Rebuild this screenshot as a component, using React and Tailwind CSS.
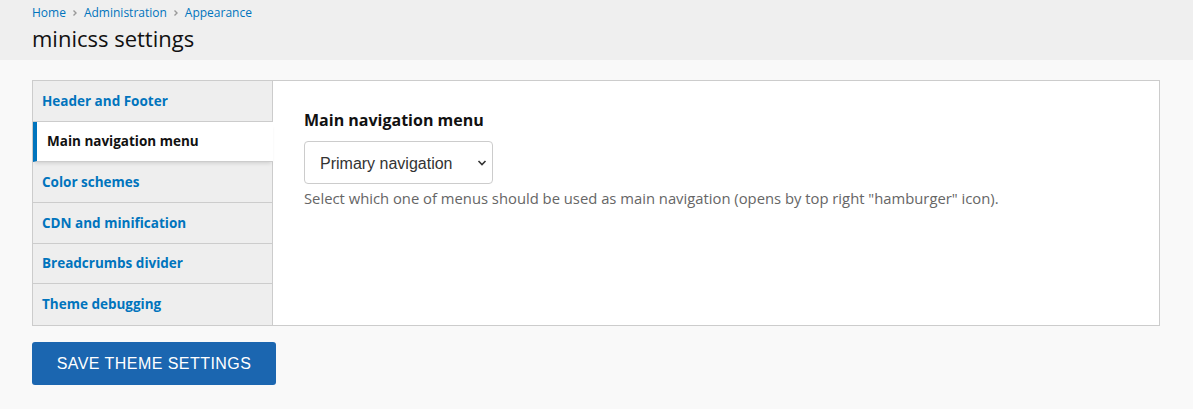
import { useState } from 'react';

const tabs = [
  'Header and Footer',
  'Main navigation menu',
  'Color schemes',
  'CDN and minification',
  'Breadcrumbs divider',
  'Theme debugging',
];

export default function App() {
  const [active, setActive] = useState(1);

  return (
    <div className="min-h-[409px] bg-[#f9f9f9] font-['Open_Sans',sans-serif]">
      <div className="h-[60px] bg-[#efefef] px-8 pt-[4px]">
        <nav className="flex items-center text-[12px] leading-[18px] text-[#0074bd]">
          <a href="#">Home</a>
          <svg width="12" height="12" viewBox="0 0 12 12" className="mx-[3px]">
            <path d="M4.5 3.5 7 6l-2.5 2.5" fill="none" stroke="#999" strokeWidth="1.4" />
          </svg>
          <a href="#">Administration</a>
          <svg width="12" height="12" viewBox="0 0 12 12" className="mx-[3px]">
            <path d="M4.5 3.5 7 6l-2.5 2.5" fill="none" stroke="#999" strokeWidth="1.4" />
          </svg>
          <a href="#">Appearance</a>
        </nav>
        <h1 className="mt-[1px] text-[22px] leading-[30px] text-[#111]">minicss settings</h1>
      </div>

      <div className="px-8 pt-5 pb-6">
        <div className="flex w-[1128px] border border-[#ccc] bg-white">
          <ul className="w-[240px] shrink-0 border-r border-[#ccc] bg-[#eee]">
            {tabs.map((t, i) =>
              i === active ? (
                <li
                  key={t}
                  className="relative -mr-px flex h-[40.67px] items-center border-b border-l-4 border-b-[#ccc] border-l-[#0074bd] bg-white pl-[10px] text-[13.5px] font-bold text-[#111] shadow-[0_3px_4px_-2px_rgba(0,0,0,0.15)]"
                >
                  {t}
                </li>
              ) : (
                <li
                  key={t}
                  onClick={() => setActive(i)}
                  className={`flex h-[40.67px] cursor-pointer items-center pl-[9px] text-[13.5px] font-bold text-[#0074bd] ${i < tabs.length - 1 ? 'border-b border-[#ccc]' : ''}`}
                >
                  {t}
                </li>
              )
            )}
          </ul>

          <div className="flex-1 pl-[31px] pt-[28px]">
            <label className="block text-[16px] font-bold leading-[22px] text-[#111]">
              Main navigation menu
            </label>
            <div className="relative mt-[10px] w-[189px]">
              <select className="h-[43px] w-full appearance-none rounded-[4px] border border-[#ccc] bg-white pl-[15px] pt-[2px] font-['Liberation_Sans',Arial,sans-serif] text-[16px] text-[#333] outline-none">
                <option>Primary navigation</option>
              </select>
              <svg
                width="10"
                height="10"
                viewBox="0 0 10 10"
                className="pointer-events-none absolute right-[6px] top-[17px]"
              >
                <path d="M1.5 3 5 6.5 8.5 3" fill="none" stroke="#333" strokeWidth="1.6" />
              </svg>
            </div>
            <p className="mt-[4px] text-[14.8px] leading-[20px] text-[#666]">
              Select which one of menus should be used as main navigation (opens by top right "hamburger" icon).
            </p>
          </div>
        </div>

        <button className="mt-4 h-[43px] w-[244px] rounded-[3px] bg-[#1b66b0] pt-[2px] font-['Liberation_Sans',Arial,sans-serif] text-[16px] tracking-[0.45px] text-white">
          SAVE THEME SETTINGS
        </button>
      </div>
    </div>
  );
}
